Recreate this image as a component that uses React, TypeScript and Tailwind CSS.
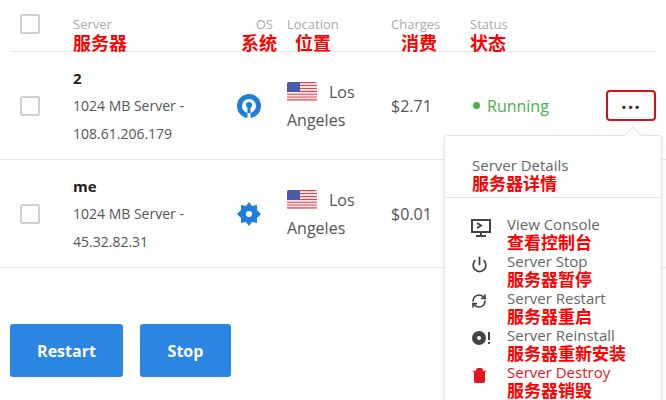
import { Power, RefreshCw, Trash2 } from "lucide-react";

const FONT = { fontFamily: '"Open Sans", "Noto Sans CJK SC", sans-serif' };

function Box() {
  return <div className="h-[20px] w-[20px] rounded-[2px] border-2 border-[#d0d0d0] bg-white" />;
}

function Flag() {
  return (
    <svg width="30" height="20" viewBox="0 0 30 20" className="rounded-[2px]">
      {[0, 1, 2, 3, 4, 5, 6].map((i) => (
        <rect key={i} x="0" y={i * 2.86} width="30" height="1.43" fill="#e0464e" />
      ))}
      {[0, 1, 2, 3, 4, 5].map((i) => (
        <rect key={"w" + i} x="0" y={i * 2.86 + 1.43} width="30" height="1.43" fill="#fbeaea" />
      ))}
      <rect x="0" y="0" width="13" height="10" fill="#4a5ca8" />
    </svg>
  );
}

function OpenVpn() {
  return (
    <svg width="26" height="26" viewBox="0 0 26 26">
      <circle cx="13" cy="13" r="12" fill="#1f7fd8" />
      <circle cx="13" cy="13" r="7" fill="#fff" />
      <circle cx="13" cy="12" r="3" fill="#1f7fd8" />
      <rect x="11.5" y="13" width="3" height="10" fill="#1f7fd8" />
      <rect x="11.5" y="20" width="3" height="5" fill="#fff" />
    </svg>
  );
}

function Gear() {
  return (
    <svg width="26" height="26" viewBox="0 0 26 26">
      <polygon
        points="13,1 16,5 21,4 21,9 25,13 21,17 21,22 16,21 13,25 10,21 5,22 5,17 1,13 5,9 5,4 10,5"
        fill="#1f7fd8"
      />
      <circle cx="13" cy="13" r="3" fill="#fff" />
    </svg>
  );
}

function Row({ name, ip, icon, charge, running }: { name: string; ip: string; icon: React.ReactNode; charge: string; running?: boolean }) {
  return (
    <div className="flex h-[108px] items-center border-b border-[#e6e6e6]">
      <div className="w-[73px] pl-[20px]"><Box /></div>
      <div className="w-[150px] text-[#555] text-[14px] leading-[28px]">
        <div className="text-[15px] font-bold text-[#222]">{name}</div>
        <div>1024 MB Server -</div>
        <div>{ip}</div>
      </div>
      <div className="w-[64px] pl-[13px]">{icon}</div>
      <div className="w-[104px] text-[16px] leading-[28px] text-[#555]">
        <div className="flex items-center gap-[12px]"><Flag /><span>Los</span></div>
        <div>Angeles</div>
      </div>
      <div className="w-[79px] text-[16px] text-[#555]">{charge}</div>
      {running && (
        <div className="flex w-[136px] items-center gap-[7px] text-[16px] text-[#4caf50]">
          <span className="ml-[3px] h-[7px] w-[7px] rounded-full bg-[#4caf50]" />Running
        </div>
      )}
      {running && (
        <div className="flex h-[31px] w-[50px] items-center justify-center rounded-[4px] border-2 border-[#d3101c] text-[#333]">
          <span className="text-[20px] font-bold leading-none tracking-[1px] -mt-[8px]">...</span>
        </div>
      )}
    </div>
  );
}

function Item({ icon, en, zh, red }: { icon: React.ReactNode; en: string; zh: string; red?: boolean }) {
  return (
    <div className="flex h-[37px]">
      <div className="w-[36px] pt-[3px] text-[#444]">{icon}</div>
      <div>
        <div className={`text-[15px] leading-[17px] ${red ? "text-[#e5161f]" : "text-[#666]"}`}>{en}</div>
        <div className="text-[17px] font-bold leading-[20px] text-[#ff0000]">{zh}</div>
      </div>
    </div>
  );
}

const ZH = "text-[18px] font-bold leading-[20px] text-[#ff0000]";

export default function App() {
  return (
    <div className="relative h-[400px] w-[666px] overflow-hidden bg-white" style={FONT}>
      <div className="mx-[10px] flex h-[52px] border-b border-[#e6e6e6]">
        <div className="w-[63px] pl-[10px] pt-[14px]"><Box /></div>
        <div className="w-[150px] pt-[15px]">
          <div className="text-[13px] leading-[18px] text-[#aaa]">Server</div>
          <div className={ZH}>服务器</div>
        </div>
        <div className="w-[64px] pt-[15px] text-right pr-[10px]">
          <div className="text-[13px] leading-[18px] text-[#aaa] pr-[4px]">OS</div>
          <div className={`${ZH} -ml-4`}>系统</div>
        </div>
        <div className="w-[104px] pt-[15px]">
          <div className="text-[13px] leading-[18px] text-[#aaa]">Location</div>
          <div className={`${ZH} pl-[8px]`}>位置</div>
        </div>
        <div className="w-[79px] pt-[15px]">
          <div className="text-[13px] leading-[18px] text-[#aaa]">Charges</div>
          <div className={`${ZH} pl-[10px]`}>消费</div>
        </div>
        <div className="pt-[15px]">
          <div className="text-[13px] leading-[18px] text-[#aaa]">Status</div>
          <div className={ZH}>状态</div>
        </div>
      </div>
      <div>
        <Row name="2" ip="108.61.206.179" icon={<OpenVpn />} charge="$2.71" running />
        <Row name="me" ip="45.32.82.31" icon={<Gear />} charge="$0.01" />
      </div>
      <div className="ml-[10px] mt-[56px] flex gap-[17px]">
        <button className="h-[53px] w-[113px] rounded-[3px] bg-[#2a86e0] text-[16px] font-bold text-white">Restart</button>
        <button className="h-[53px] w-[91px] rounded-[3px] bg-[#2a86e0] text-[16px] font-bold text-white">Stop</button>
      </div>

      <div className="absolute left-[444px] top-[135px] w-[218px] rounded-[3px] border border-[#e4e4e4] bg-white shadow-[0_2px_6px_rgba(0,0,0,0.08)]">
        <div className="absolute -top-[7px] right-[22px] h-[12px] w-[12px] rotate-45 border-l border-t border-[#e4e4e4] bg-white" />
        <div className="border-b border-[#e4e4e4] px-[27px] pb-[3px] pt-[21px]">
          <div className="text-[15px] leading-[17px] text-[#666]">Server Details</div>
          <div className="text-[17px] font-bold leading-[20px] text-[#ff0000]">服务器详情</div>
        </div>
        <div className="flex flex-col px-[26px] pb-[4px] pt-[18px]">
          <Item
            icon={
              <svg width="20" height="18" viewBox="0 0 20 18" fill="none" stroke="#444" strokeWidth="2">
                <rect x="1" y="1" width="18" height="12" />
                <path d="M6 4l4 2.5L6 9M10 13v3M5 17h10" />
              </svg>
            }
            en="View Console"
            zh="查看控制台"
          />
          <Item icon={<Power size={17} strokeWidth={2.5} />} en="Server Stop" zh="服务器暂停" />
          <Item icon={<RefreshCw size={16} strokeWidth={2.5} />} en="Server Restart" zh="服务器重启" />
          <Item
            icon={
              <svg width="20" height="16" viewBox="0 0 20 16">
                <circle cx="8" cy="8" r="7" fill="#444" />
                <circle cx="8" cy="8" r="2" fill="#fff" />
                <rect x="17" y="2" width="2" height="8" fill="#444" />
                <rect x="17" y="12" width="2" height="2" fill="#444" />
              </svg>
            }
            en="Server Reinstall"
            zh="服务器重新安装"
          />
          <Item icon={<Trash2 size={17} color="#e5161f" fill="#e5161f" strokeWidth={1.5} />} en="Server Destroy" zh="服务器销毁" red />
        </div>
      </div>
    </div>
  );
}
